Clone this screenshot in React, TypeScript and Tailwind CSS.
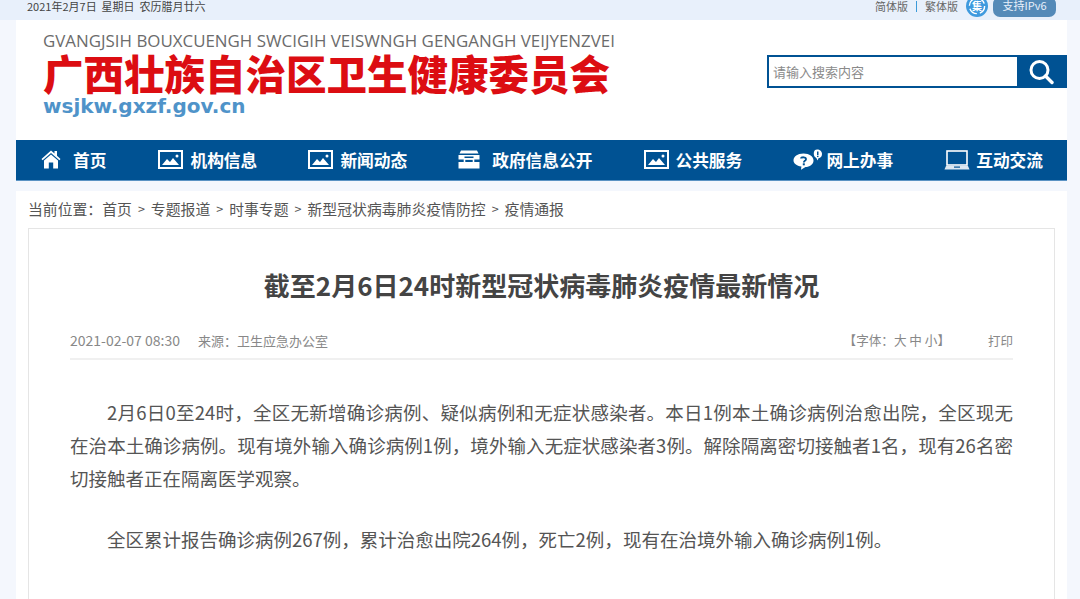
import type { ReactNode } from 'react';

const FONT = '[font-family:"Noto_Sans_CJK_SC",sans-serif]';

function PictureIcon() {
    return (
        <svg width="25" height="19" viewBox="0 0 25 19" className="shrink-0">
            <rect x="1" y="1" width="23" height="17" fill="none" stroke="#fff" strokeWidth="2" />
            <path d="M4 15 L9 9 L12 12 L15 8 L21 15 Z" fill="#fff" />
            <circle cx="19" cy="6" r="1.5" fill="#fff" />
        </svg>
    );
}

function HomeIcon() {
    return (
        <svg width="20" height="19" viewBox="0 0 20 19" className="shrink-0">
            <path
                d="M10 0.5 L13.5 3.6 V1 H16 V5.8 L19.5 9 L18.4 10.2 L10 3 L1.6 10.2 L0.5 9 Z"
                fill="#fff"
            />
            <path d="M3 10.5 L10 4.6 L17 10.5 V18.5 H12.2 V12.5 H7.8 V18.5 H3 Z" fill="#fff" />
        </svg>
    );
}

function CabinetIcon() {
    return (
        <svg width="22" height="19" viewBox="0 0 22 19" className="shrink-0">
            <path d="M3 0.5 H19 L20.5 3.5 H1.5 Z" fill="#fff" />
            <path d="M0.5 5 H21.5 V9.5 H0.5 Z" fill="#fff" />
            <path d="M0.5 12 H21.5 V18.5 H0.5 Z" fill="#fff" />
            <rect x="6.5" y="6.5" width="9" height="1.6" fill="#005293" />
            <rect x="6.5" y="9" width="9" height="5" fill="none" stroke="#fff" strokeWidth="1.6" />
        </svg>
    );
}

function ChatIcon() {
    return (
        <svg width="30" height="21" viewBox="0 0 30 21" className="shrink-0">
            <path
                d="M10.5 4.5 C16.5 4.5 20.5 7.5 20.5 11.5 C20.5 15.5 16.5 18 12.5 18 L8 20.8 L8.4 17.6 C3.5 16.6 0.5 14.5 0.5 11.5 C0.5 7.5 4.5 4.5 10.5 4.5 Z"
                fill="#fff"
            />
            <path
                d="M24 0.5 C27 0.5 29 2.5 29 5 C29 7.5 27.5 9 25.5 9.3 L24.5 11.5 L23.5 9.2 L21.5 7.5 C20 4 21 0.5 24 0.5 Z"
                fill="#fff"
            />
            <rect x="24" y="2.5" width="1.5" height="3.5" fill="#005293" />
            <rect x="24" y="6.7" width="1.5" height="1.4" fill="#005293" />
            <path
                d="M8 9.5 C8.2 8 13 7.5 13 10.2 C13 11.9 10.8 11.8 10.8 13.5"
                fill="none"
                stroke="#005293"
                strokeWidth="1.8"
            />
            <rect x="9.8" y="14.3" width="2" height="2" fill="#005293" />
        </svg>
    );
}

function LaptopIcon() {
    return (
        <svg width="26" height="20" viewBox="0 0 26 20" className="shrink-0">
            <rect x="3" y="1" width="20" height="14" fill="none" stroke="#fff" strokeWidth="1.6" />
            <path d="M2 16 H24 L25.5 19.5 H0.5 Z" fill="#dbe7f2" />
            <rect x="10" y="16.5" width="6" height="1.2" fill="#005293" />
        </svg>
    );
}

function CloudBadge() {
    return (
        <svg width="22" height="22" viewBox="0 0 22 22" className="ml-[8px] mt-[-5px] shrink-0">
            <circle cx="11" cy="11" r="11" fill="#3f9ade" />
            <circle cx="11" cy="11" r="7.6" fill="none" stroke="#fff" strokeWidth="1.4" strokeDasharray="9 3" />
            <text x="11" y="14.5" textAnchor="middle" fontSize="10" fontWeight="700" fill="#fff">
                集
            </text>
        </svg>
    );
}

function NavItem({ icon, label, gap }: { icon: ReactNode; label: string; gap: string }) {
    return (
        <a className={`flex items-center ${gap} text-[16.7px] font-bold text-white`}>
            {icon}
            <span className="pt-[1px]">{label}</span>
        </a>
    );
}

const crumbs = ['专题报道', '时事专题', '新型冠状病毒肺炎疫情防控', '疫情通报'];

export default function App() {
    return (
        <div className={`h-[599px] w-[1080px] overflow-hidden bg-[#f4f7fd] ${FONT}`}>
            {/* top bar */}
            <div className="h-[20px] bg-[#e8f0fb]">
                <div className="flex h-[20px] items-start justify-between pl-[27px] pr-[24px]">
                    <p className="text-[11px] leading-[12px] text-[#444]">2021年2月7日&nbsp; 星期日&nbsp; 农历腊月廿六</p>
                    <div className="flex h-[17px] items-start">
                        <span className="text-[11px] leading-[12px] text-[#666]">简体版</span>
                        <span className="mx-[8px] mt-[1px] h-[11px] w-px bg-[#3b9ad9]" />
                        <span className="text-[11px] leading-[12px] text-[#666]">繁体版</span>
                        <CloudBadge />
                        <div className="ml-[5px] mt-[-3px] flex h-[20px] w-[63px] items-center justify-center rounded-[7px] bg-[#548ab8] pb-[4px] text-[11px] text-[#e8f0fb]">
                            支持IPv6
                        </div>
                    </div>
                </div>
            </div>

            <div className="ml-[16px] w-[1051px]">
                {/* logo and search */}
                <header className="flex h-[120px] items-start justify-between bg-white">
                    <div className="pl-[27px] pt-[13px]">
                        <p className="text-[16.9px] leading-[16px] whitespace-nowrap text-[#6b6b6b] [font-family:'Open_Sans',sans-serif]">
                            GVANGJSIH BOUXCUENGH SWCIGIH VEISWNGH GENGANGH VEIJYENZVEI
                        </p>
                        <h1 className="mt-[3px] text-[40.5px] font-black leading-[41px] text-[#dc0d12]">
                            广西壮族自治区卫生健康委员会
                        </h1>
                        <p className="mt-[2px] text-[20px] font-bold leading-[22px] text-[#4f93c9] [font-family:'DejaVu_Sans',sans-serif]">
                            wsjkw.gxzf.gov.cn
                        </p>
                    </div>
                    <div className="mt-[35px] flex h-[33px] w-[300px] border-2 border-[#005293]">
                        <div className="flex flex-1 items-center pl-[4px] text-[13px] text-[#8a8a8a]">请输入搜索内容</div>
                        <div className="flex w-[48px] items-center justify-center bg-[#005293]">
                            <svg width="26" height="26" viewBox="0 0 26 26">
                                <circle cx="11.5" cy="11" r="8.5" fill="none" stroke="#fff" strokeWidth="3" />
                                <path d="M17.5 17 L24 23.5" stroke="#fff" strokeWidth="3.4" strokeLinecap="round" />
                            </svg>
                        </div>
                    </div>
                </header>

                {/* main nav */}
                <nav className="flex h-[41px] items-center justify-between border-b border-[#5b93c4] bg-[#005293] pl-[25px] pr-[24px]">
                    <NavItem icon={<HomeIcon />} label="首页" gap="gap-[12px]" />
                    <NavItem icon={<PictureIcon />} label="机构信息" gap="gap-[8px]" />
                    <NavItem icon={<PictureIcon />} label="新闻动态" gap="gap-[7px]" />
                    <NavItem icon={<CabinetIcon />} label="政府信息公开" gap="gap-[12px]" />
                    <NavItem icon={<PictureIcon />} label="公共服务" gap="gap-[7px]" />
                    <NavItem icon={<ChatIcon />} label="网上办事" gap="gap-[3px]" />
                    <NavItem icon={<LaptopIcon />} label="互动交流" gap="gap-[6px]" />
                </nav>

                <div className="mt-[10px] h-[408px] bg-white px-[12px]">
                    {/* breadcrumb */}
                    <div className="flex h-[37px] items-center pb-[1px] text-[14.85px] text-[#555]">
                        <span>当前位置：首页</span>
                        {crumbs.map((c) => (
                            <span key={c} className="flex items-center">
                                <span className="mx-[6px] text-[12.5px]">&gt;</span>
                                <span>{c}</span>
                            </span>
                        ))}
                    </div>

                    {/* article card */}
                    <article className="h-[400px] border border-[#e5e5e5] px-[41px]">
                        <h2 className="mt-[37px] text-center text-[26px] font-bold leading-[38px] text-[#444]">
                            截至2月6日24时新型冠状病毒肺炎疫情最新情况
                        </h2>
                        <div className="mt-[22px] flex h-[34px] items-center justify-between border-b-2 border-[#f0f0f0] pb-[3px] text-[13px] text-[#888]">
                            <div className="flex items-center">
                                <span className="text-[14px]">2021-02-07 08:30</span>
                                <span className="ml-[18px]">来源：卫生应急办公室</span>
                            </div>
                            <div className="flex items-center">
                                <span className="text-[12.6px]">【字体：大 中 小】</span>
                                <span className="ml-[38px] pt-[1px] text-[12.5px]">打印</span>
                            </div>
                        </div>
                        <div className="mt-[36px] text-justify text-[18.5px] leading-[33px] text-[#555]">
                            <p className="indent-[37px]">
                                2月6日0至24时，全区无新增确诊病例、疑似病例和无症状感染者。本日1例本土确诊病例治愈出院，全区现无在治本土确诊病例。现有境外输入确诊病例1例，境外输入无症状感染者3例。解除隔离密切接触者1名，现有26名密切接触者正在隔离医学观察。
                            </p>
                            <p className="mt-[28px] indent-[37px]">
                                全区累计报告确诊病例267例，累计治愈出院264例，死亡2例，现有在治境外输入确诊病例1例。
                            </p>
                        </div>
                    </article>
                </div>
            </div>
        </div>
    );
}
